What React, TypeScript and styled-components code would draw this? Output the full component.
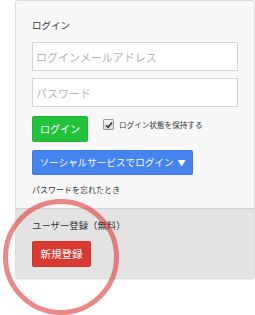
import React from 'react';
import styled, { createGlobalStyle } from 'styled-components';

const GlobalStyle = createGlobalStyle`
  html, body {
    margin: 0;
    padding: 0;
    background: #ffffff;
  }
  body {
    font-family: 'Noto Sans CJK JP', 'Noto Sans', sans-serif;
    color: #333;
  }
`;

const Page = styled.div`
  position: relative;
  width: 255px;
  height: 315px;
  overflow: hidden;
  padding-left: 15px;
  box-sizing: border-box;
`;

const Panel = styled.div`
  width: 240px;
  box-sizing: border-box;
  background: #f8f8f8;
  border: 1px solid #dddddd;
  border-radius: 3px;
  overflow: hidden;
  box-shadow: 0 1px 1px rgba(0, 0, 0, 0.06);
`;

const LoginArea = styled.div`
  padding: 17px 16px 0;
  display: flex;
  flex-direction: column;
`;

const Heading = styled.div`
  font-size: 9.5px;
  line-height: 14px;
  height: 14px;
  color: #333;
`;

const Field = styled.input<{ $mt: number }>`
  display: block;
  box-sizing: border-box;
  width: 206px;
  height: 29px;
  margin-top: ${(p) => p.$mt}px;
  padding: 0 3px;
  border: 1px solid #d6d6d6;
  background: #fff;
  font-family: inherit;
  font-size: 11px;
  outline: none;
  &::placeholder {
    color: #b4b4b4;
  }
`;

const Row = styled.div`
  display: flex;
  align-items: flex-start;
  margin-top: 9px;
`;

const Button = styled.button<{ $bg: string; $w: number; $h: number; $fs: number }>`
  box-sizing: border-box;
  width: ${(p) => p.$w}px;
  height: ${(p) => p.$h}px;
  padding: 0;
  border: 1px solid rgba(0, 0, 0, 0.08);
  border-radius: 2px;
  background: ${(p) => p.$bg};
  color: #fff;
  font-family: inherit;
  font-size: ${(p) => p.$fs}px;
  line-height: 1;
  display: flex;
  align-items: center;
  justify-content: center;
  white-space: nowrap;
`;

const Keep = styled.label`
  display: flex;
  align-items: center;
  margin-left: 15px;
  margin-top: 3px;
  font-size: 7.6px;
  color: #333;
`;

const Check = styled.span`
  width: 11px;
  height: 11px;
  box-sizing: border-box;
  border: 1px solid #9a9a9a;
  border-radius: 1px;
  background: linear-gradient(#f4f4f4, #dcdcdc);
  display: flex;
  align-items: center;
  justify-content: center;
  margin-right: 5px;
`;

const SocialWrap = styled.div`
  margin-top: 8px;
`;

const Caret = styled.span`
  font-size: 8px;
  margin-left: 4px;
`;

const Forgot = styled.div`
  margin-top: 9px;
  font-size: 8px;
  line-height: 12px;
  color: #333;
  margin-bottom: 12px;
`;

const Register = styled.div`
  background: #e3e3e3;
  border-top: 1px solid #d2d2d2;
  padding: 9px 16px 11px;
`;

const RegisterTitle = styled.div`
  font-size: 9.4px;
  line-height: 14px;
  color: #333;
  margin-bottom: 9px;
`;

const Ring = styled.svg`
  position: absolute;
  left: 0;
  top: 196px;
  pointer-events: none;
`;

const App = () => {
  return (
    <Page>
      <GlobalStyle />
      <Panel>
        <LoginArea>
          <Heading>ログイン</Heading>
          <Field $mt={10} placeholder="ログインメールアドレス" />
          <Field $mt={7} type="password" placeholder="パスワード" />
          <Row>
            <Button $bg="#22c33a" $w={56} $h={26} $fs={10}>ログイン</Button>
            <Keep>
              <Check>
                <svg width="8" height="8" viewBox="0 0 8 8">
                  <path d="M1 4.2 L3.1 6.3 L7 1.4" fill="none" stroke="#333" strokeWidth="1.6" />
                </svg>
              </Check>
              ログイン状態を保持する
            </Keep>
          </Row>
          <SocialWrap>
            <Button $bg="#4584ee" $w={161} $h={25} $fs={9.6}>
              ソーシャルサービスでログイン<Caret>▼</Caret>
            </Button>
          </SocialWrap>
          <Forgot>パスワードを忘れたとき</Forgot>
        </LoginArea>
        <Register>
          <RegisterTitle>ユーザー登録（無料）</RegisterTitle>
          <Button $bg="#d93b33" $w={59} $h={26} $fs={10.5}>新規登録</Button>
        </Register>
      </Panel>
      <Ring width="124" height="124" viewBox="0 0 124 124">
        <circle cx="61" cy="61" r="55.5" fill="none" stroke="rgba(222, 56, 56, 0.6)" strokeWidth="5" />
      </Ring>
    </Page>
  );
};

export default App;
